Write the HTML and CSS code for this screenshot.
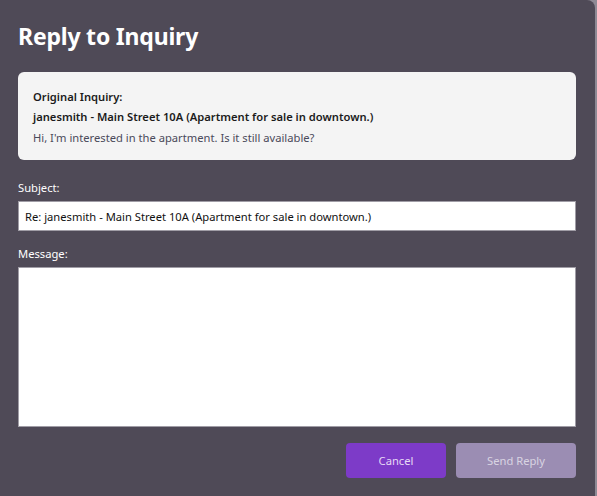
FILE: index.html
```html
<!DOCTYPE html>
<html>
<head>
<meta charset="utf-8">
<link rel="stylesheet" href="styles.css">
</head>
<body>
<div class="dialog">
  <h1 class="title">Reply to Inquiry</h1>
  <div class="card">
    <div class="card-label">Original Inquiry:</div>
    <div class="card-subject">janesmith - Main Street 10A (Apartment for sale in downtown.)</div>
    <div class="card-body">Hi, I'm interested in the apartment. Is it still available?</div>
  </div>
  <label class="field-label">Subject:</label>
  <input class="input" type="text" value="Re: janesmith - Main Street 10A (Apartment for sale in downtown.)">
  <label class="field-label field-label-msg">Message:</label>
  <textarea class="textarea"></textarea>
  <div class="actions">
    <button class="btn btn-cancel">Cancel</button>
    <button class="btn btn-send">Send Reply</button>
  </div>
</div>
</body>
</html>
```
FILE: styles.css
```css
html, body {
  margin: 0;
  padding: 0;
  height: 100%;
  background: #8e8a95;
}
body {
  font-family: "Noto Sans", "Open Sans", sans-serif;
  font-size: 11.2px;
}
.dialog {
  box-sizing: border-box;
  width: 595px;
  height: 496px;
  padding: 0 19px 0 18px;
  display: flex;
  flex-direction: column;
  border-top-right-radius: 8px;
  background: #4f4a57;
}
.title {
  margin: 0;
  padding-top: 23px;
  height: 72px;
  box-sizing: border-box;
  font-size: 23px;
  line-height: 26px;
  font-weight: 700;
  color: #ffffff;
  letter-spacing: -0.2px;
}
.card {
  height: 88px;
  box-sizing: border-box;
  background: #f4f4f4;
  border-radius: 6px;
  padding: 15px 15px 0 15px;
  color: #1b1b1b;
}
.card-label {
  font-weight: 600;
  line-height: 20px;
  height: 20px;
}
.card-subject {
  font-weight: 600;
  line-height: 20px;
  height: 20px;
}
.card-body {
  margin-top: 1px;
  line-height: 20px;
  color: #4a4a5a;
}
.field-label {
  display: block;
  color: #ffffff;
  margin-top: 20px;
  line-height: 16px;
  height: 21px;
}
.field-label-msg {
  margin-top: 15px;
}
.input {
  box-sizing: border-box;
  height: 30px;
  width: 100%;
  margin: 0;
  border: 1px solid #a09da6;
  background: #ffffff;
  padding: 0 6px;
  font-family: inherit;
  font-size: 11.2px;
  color: #111;
  outline: none;
}
.textarea {
  box-sizing: border-box;
  height: 160px;
  width: 100%;
  margin: 0;
  border: 1px solid #a09da6;
  background: #ffffff;
  resize: none;
  display: block;
  outline: none;
}
.actions {
  display: flex;
  justify-content: flex-end;
  gap: 10px;
  margin-top: 16px;
}
.btn {
  height: 35px;
  border: none;
  border-radius: 4px;
  font-family: inherit;
  font-size: 11.2px;
  padding: 0;
}
.btn-cancel {
  width: 100px;
  background: #7d3bc8;
  color: #e6d9f5;
}
.btn-send {
  width: 120px;
  background: #9b8db3;
  color: #d9d4e2;
}
```
